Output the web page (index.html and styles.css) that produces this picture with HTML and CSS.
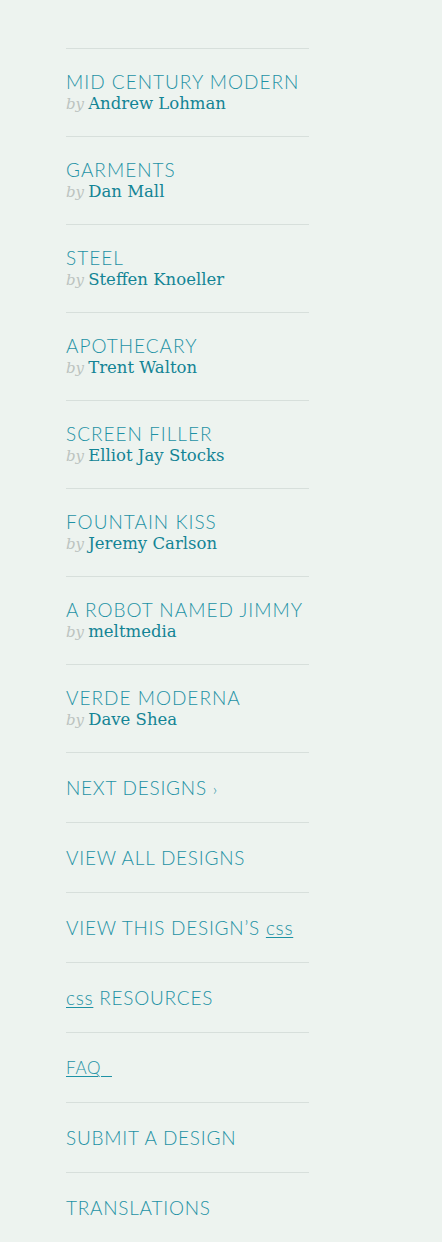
FILE: index.html
```html
<!DOCTYPE html>
<html>
<head>
<meta charset="utf-8">
<link rel="stylesheet" href="styles.css">
</head>
<body>
<aside class="sidebar">
  <ul class="designs">
    <li><a class="title">Mid Century Modern</a><span class="by">by</span> <a class="name">Andrew Lohman</a></li>
    <li><a class="title">Garments</a><span class="by">by</span> <a class="name">Dan Mall</a></li>
    <li><a class="title">Steel</a><span class="by">by</span> <a class="name">Steffen Knoeller</a></li>
    <li><a class="title">Apothecary</a><span class="by">by</span> <a class="name">Trent Walton</a></li>
    <li><a class="title">Screen Filler</a><span class="by">by</span> <a class="name">Elliot Jay Stocks</a></li>
    <li><a class="title">Fountain Kiss</a><span class="by">by</span> <a class="name">Jeremy Carlson</a></li>
    <li><a class="title">A Robot Named Jimmy</a><span class="by">by</span> <a class="name">meltmedia</a></li>
    <li><a class="title">Verde Moderna</a><span class="by">by</span> <a class="name">Dave Shea</a></li>
  </ul>
  <ul class="nav">
    <li><a>Next Designs <span class="arrow">›</span></a></li>
    <li><a>View All Designs</a></li>
    <li><a>View This Design’s <abbr class="abbr">css</abbr></a></li>
    <li><a><abbr class="abbr">css</abbr> Resources</a></li>
    <li><a class="faq">FAQ&nbsp;&nbsp;</a></li>
    <li><a>Submit a Design</a></li>
    <li><a>Translations</a></li>
  </ul>
</aside>
</body>
</html>
```
FILE: styles.css
```css
html, body {
  margin: 0;
  padding: 0;
  background: #edf3ef;
}
.sidebar {
  width: 243px;
  margin-left: 66px;
  padding-top: 48px;
  font-family: Lato, "Noto Sans", sans-serif;
}
ul {
  list-style: none;
  margin: 0;
  padding: 0;
}
li {
  border-top: 1px solid #d7dfdb;
}
.designs li {
  padding-top: 22px;
  height: 65px;
}
.title {
  display: block;
  font-weight: 300;
  font-size: 19px;
  line-height: 22px;
  letter-spacing: 1px;
  text-transform: uppercase;
  color: #1e92a5;
}
.by {
  font-family: "DejaVu Serif", serif;
  font-style: italic;
  font-size: 15px;
  color: #bcc3c0;
}
.name {
  font-family: "DejaVu Serif", serif;
  font-size: 16.5px;
  line-height: 20px;
  color: #138495;
}
.nav li {
  height: 69px;
  display: flex;
  align-items: center;
}
.nav a {
  font-weight: 300;
  font-size: 19px;
  letter-spacing: 0.75px;
  text-transform: uppercase;
  color: #1e92a5;
}
.abbr {
  text-transform: lowercase;
  text-decoration: underline;
  text-decoration-thickness: 1px;
  text-underline-offset: 2px;
}
.nav a.faq {
  text-decoration: underline;
  text-decoration-thickness: 1px;
  text-underline-offset: 2px;
  font-size: 17px;
}
.arrow {
  font-size: 16px;
}
```
